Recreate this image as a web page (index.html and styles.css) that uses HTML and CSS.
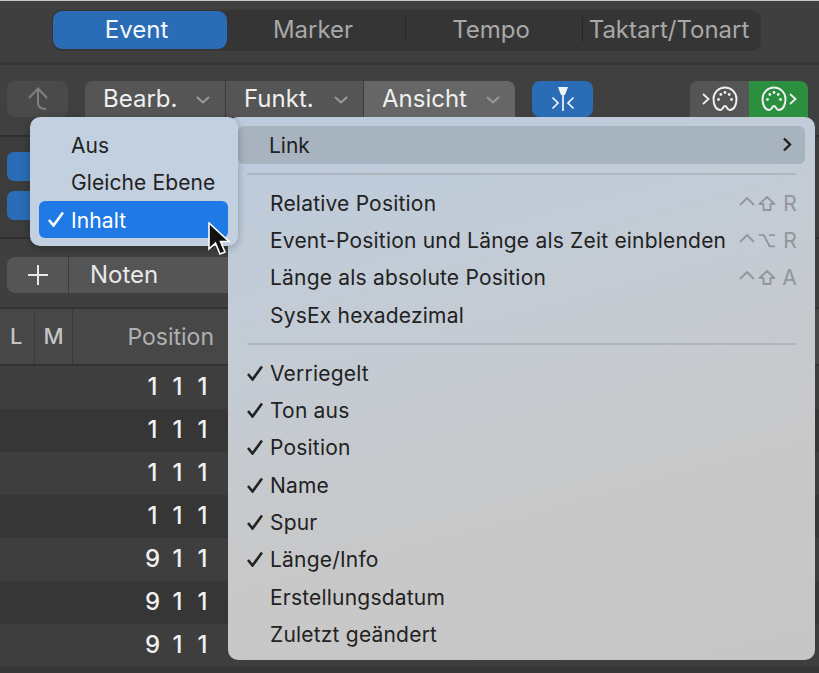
FILE: index.html
```html
<!DOCTYPE html>
<html lang="de">
<head>
    <meta charset="UTF-8">
    <title>Event-Liste</title>
    <link rel="stylesheet" href="styles.css">
</head>
<body>
    <svg class="defs" width="0" height="0">
        <symbol id="chevron" viewBox="0 0 14 8"><path d="M1.500 1.500 7 6.500l5.500-5" fill="none" stroke="currentColor" stroke-width="2" stroke-linecap="round" stroke-linejoin="round"/></symbol>
        <symbol id="midi" viewBox="0 0 26 26">
            <path d="M8.500 24C4.500 24 1.500 20 1.500 13a11.500 11.500 0 0 1 23 0c0 7-3 11-7 11-2.500 0-2.500-4-4.500-4s-2 4-4.500 4Z" fill="none" stroke="currentColor" stroke-width="2"/>
            <g fill="currentColor"><circle cx="6.500" cy="13.500" r="1.400"/><circle cx="8.800" cy="8.500" r="1.400"/><circle cx="13" cy="6.500" r="1.400"/><circle cx="17.200" cy="8.500" r="1.400"/><circle cx="19.500" cy="13.500" r="1.400"/></g>
        </symbol>
        <symbol id="ctrl" viewBox="0 0 16 10"><path d="M1 9 8 2l7 7" fill="none" stroke="currentColor" stroke-width="1.800"/></symbol>
        <symbol id="shift" viewBox="0 0 18 15"><path d="M9 1 1.500 8H5.500v6h7V8h4Z" fill="none" stroke="currentColor" stroke-width="1.800" stroke-linejoin="round"/></symbol>
        <symbol id="opt" viewBox="0 0 16 14"><path d="M0.500 2H5l5.500 10.500H15.500M10 2h5.500" fill="none" stroke="currentColor" stroke-width="1.800"/></symbol>
        <symbol id="check" viewBox="0 0 16 16"><path d="M1 9 5.500 14.500 15 1.500" fill="none" stroke="currentColor" stroke-width="2.600"/></symbol>
    </svg>

    <div class="window">
        <header class="tab-bar">
            <nav class="tabs">
                <span class="tab tab-active">Event</span>
                <span class="tab tab-line">Marker</span>
                <span class="tab tab-line">Tempo</span>
                <span class="tab">Taktart/Tonart</span>
            </nav>
        </header>

        <section class="toolbar">
            <button class="btn btn-up">
                <svg width="24" height="26" viewBox="0 0 24 26"><path d="M3 12 12 2.500 21 12M12 3v14c0 4 3 6 8 6" fill="none" stroke="currentColor" stroke-width="2"/></svg>
            </button>
            <div class="btn-group">
                <button class="btn menu-btn menu-edit">Bearb. <svg class="chev"><use href="#chevron"/></svg></button>
                <button class="btn menu-btn menu-func">Funkt. <svg class="chev"><use href="#chevron"/></svg></button>
                <button class="btn menu-btn menu-view">Ansicht <svg class="chev"><use href="#chevron"/></svg></button>
            </div>
            <button class="btn btn-catch">
                <svg width="24" height="26" viewBox="0 0 24 26"><path d="M7 1h10l-3 8h-4Z" fill="currentColor"/><path d="M12 7v18M1.500 11.500l5.500 5.500-5.500 5.500M22.500 11.500 17 17l5.500 5.500" fill="none" stroke="currentColor" stroke-width="1.700"/></svg>
            </button>
            <div class="btn-group midi-group">
                <button class="btn midi-btn">
                    <svg class="midi-arrow" viewBox="0 0 8 12"><path d="M1 1l5.500 5L1 11" fill="none" stroke="currentColor" stroke-width="1.800"/></svg>
                    <svg class="midi-icon"><use href="#midi"/></svg>
                </button>
                <button class="btn midi-btn midi-on">
                    <svg class="midi-icon"><use href="#midi"/></svg>
                    <svg class="midi-arrow" viewBox="0 0 8 12"><path d="M1 1l5.500 5L1 11" fill="none" stroke="currentColor" stroke-width="1.800"/></svg>
                </button>
            </div>
        </section>

        <section class="filter-bar">
            <span class="filter-btn"></span>
            <span class="filter-btn"></span>
        </section>

        <section class="add-bar">
            <div class="add-group">
                <span class="add-plus"><svg width="20" height="20" viewBox="0 0 20 20"><path d="M10 0v20M0 10h20" stroke="currentColor" stroke-width="2"/></svg></span>
                <span class="add-label">Noten</span>
            </div>
        </section>

        <section class="event-list">
            <div class="list-head">
                <span class="head-l">L</span>
                <span class="head-m">M</span>
                <span class="head-pos">Position</span>
            </div>
            <div class="list-row"><span>1</span><span>1</span><span>1</span></div>
            <div class="list-row"><span>1</span><span>1</span><span>1</span></div>
            <div class="list-row"><span>1</span><span>1</span><span>1</span></div>
            <div class="list-row"><span>1</span><span>1</span><span>1</span></div>
            <div class="list-row"><span>9</span><span>1</span><span>1</span></div>
            <div class="list-row"><span>9</span><span>1</span><span>1</span></div>
            <div class="list-row"><span>9</span><span>1</span><span>1</span></div>
        </section>
    </div>

    <div class="menu view-menu">
        <div class="item item-hover">Link
            <svg class="arrow" viewBox="0 0 10 15"><path d="M2 1.500 8 7.500l-6 6" fill="none" stroke="currentColor" stroke-width="2.400"/></svg>
        </div>
        <div class="sep"></div>
        <div class="item">Relative Position
            <span class="keys"><svg class="key-ctrl"><use href="#ctrl"/></svg><svg class="key-mod"><use href="#shift"/></svg><b>R</b></span>
        </div>
        <div class="item">Event-Position und Länge als Zeit einblenden
            <span class="keys"><svg class="key-ctrl"><use href="#ctrl"/></svg><svg class="key-mod"><use href="#opt"/></svg><b>R</b></span>
        </div>
        <div class="item">Länge als absolute Position
            <span class="keys"><svg class="key-ctrl"><use href="#ctrl"/></svg><svg class="key-mod"><use href="#shift"/></svg><b>A</b></span>
        </div>
        <div class="item">SysEx hexadezimal</div>
        <div class="sep"></div>
        <div class="item"><svg class="tick"><use href="#check"/></svg>Verriegelt</div>
        <div class="item"><svg class="tick"><use href="#check"/></svg>Ton aus</div>
        <div class="item"><svg class="tick"><use href="#check"/></svg>Position</div>
        <div class="item"><svg class="tick"><use href="#check"/></svg>Name</div>
        <div class="item"><svg class="tick"><use href="#check"/></svg>Spur</div>
        <div class="item"><svg class="tick"><use href="#check"/></svg>Länge/Info</div>
        <div class="item">Erstellungsdatum</div>
        <div class="item">Zuletzt geändert</div>
    </div>

    <div class="menu link-menu">
        <div class="item">Aus</div>
        <div class="item">Gleiche Ebene</div>
        <div class="item item-active"><svg class="tick"><use href="#check"/></svg>Inhalt</div>
    </div>

    <svg class="cursor" width="24" height="34" viewBox="0 0 24 34">
        <path d="M2 1v26l6.500-6 4.500 11 5-2-4.500-10.500H22Z" fill="#111" stroke="#fff" stroke-width="1.600"/>
    </svg>
</body>
</html>
```

FILE: styles.css
```css
* {
    margin: 0;
    padding: 0;
    box-sizing: border-box;
}

html, body {
    width: 819px;
    height: 673px;
    overflow: hidden;
}

body {
    position: relative;
    font-family: Inter, 'Liberation Sans', sans-serif;
    background-color: #363636;
    color: #e8e8e8;
}

button {
    font: inherit;
    border: none;
    color: inherit;
}

.defs {
    position: absolute;
}

/* tabs */
.tab-bar {
    height: 65px;
    padding: 9px 0 0 52px;
    background-color: #3f3f3f;
    border-top: 1px solid #c9c9c9;
    border-bottom: 3px solid #353535;
}

.tabs {
    display: grid;
    grid-template-columns: 174px 179px 177px 179px;
    width: 709px;
    height: 41px;
    padding: 1px 0 0 1px;
    background-color: #353535;
    border-radius: 10px;
}

.tab {
    display: flex;
    align-items: center;
    justify-content: center;
    height: 38px;
    padding: 0 7px 2px 0;
    font-size: 24px;
    color: #a8a8a8;
    position: relative;
}

.tab-line::after {
    content: "";
    position: absolute;
    right: 0;
    top: 6px;
    height: 25px;
    border-right: 1px solid #262626;
}

.tab-active {
    background-color: #2a6cb5;
    border-radius: 9px;
    color: #f4f7fb;
}

/* toolbar */
.toolbar {
    display: flex;
    height: 72px;
    padding: 16px 11px 0 7px;
    background-color: #404040;
    border-bottom: 2px solid #2f2f2f;
}

.btn {
    display: flex;
    align-items: center;
    height: 36px;
    background-color: #555;
}

.btn-up {
    justify-content: center;
    width: 61px;
    background-color: #4a4a4a;
    border-radius: 8px;
    color: #808080;
    margin-right: 17px;
}

.btn-group {
    display: flex;
    border-radius: 8px;
    overflow: hidden;
}

.menu-btn {
    justify-content: space-between;
    font-size: 24px;
    color: #efefef;
    padding: 0 15px 2px 18px;
    border-right: 1px solid #3c3c3c;
}

.menu-edit { width: 141px; }
.menu-func { width: 138px; }
.menu-view { width: 151px; background-color: #666; border-right: none; }

.chev {
    width: 14px;
    height: 8px;
    margin-top: 4px;
    color: #9a9a9a;
}

.btn-catch {
    justify-content: center;
    width: 61px;
    margin-left: 17px;
    background-color: #2a6cb5;
    border-radius: 8px;
    color: #f2f5f9;
}

.midi-group {
    margin-left: auto;
}

.midi-btn {
    justify-content: center;
    gap: 2px;
    width: 59px;
    color: #eee;
}

.midi-on {
    background-color: #2a8f3f;
}

.midi-icon {
    width: 26px;
    height: 26px;
}

.midi-arrow {
    width: 8px;
    height: 12px;
}

/* rest of the window */
.filter-bar {
    display: flex;
    flex-direction: column;
    gap: 10px;
    height: 102px;
    padding: 15px 0 0 7px;
    background-color: #3c3c3c;
    border-bottom: 2px solid #2f2f2f;
}

.filter-btn {
    width: 60px;
    height: 29px;
    background-color: #2a6cb5;
    border-radius: 7px;
}

.add-bar {
    height: 70px;
    padding: 18px 0 0 7px;
    background-color: #3f3f3f;
    border-bottom: 2px solid #333;
}

.add-group {
    display: flex;
    width: 260px;
    height: 36px;
    background-color: #555;
    border-radius: 8px;
    font-size: 24px;
}

.add-plus {
    display: flex;
    align-items: center;
    justify-content: center;
    width: 62px;
    border-right: 1px solid #3c3c3c;
}

.add-label {
    display: flex;
    align-items: center;
    padding: 0 0 2px 21px;
}

.list-head {
    display: flex;
    align-items: center;
    height: 57px;
    background-color: #474747;
    border-bottom: 2px solid #333;
    font-size: 22px;
    color: #c4c4c4;
}

.head-l {
    width: 35px;
    padding-left: 10px;
    align-self: stretch;
    line-height: 55px;
    font-weight: 500;
    border-right: 1px solid #3a3a3a;
}

.head-m {
    width: 38px;
    text-align: center;
    align-self: stretch;
    line-height: 55px;
    font-weight: 500;
    border-right: 1px solid #3a3a3a;
}

.head-pos {
    width: 141px;
    text-align: right;
    font-size: 23px;
    color: #b0b0b0;
}

.list-row {
    display: grid;
    grid-template-columns: repeat(3, 25px);
    align-items: center;
    height: 43px;
    padding: 0 0 2px 140px;
    font-size: 24px;
    font-weight: 500;
    color: #f0f0f0;
    text-align: center;
    background-color: #3e3e3e;
}

.list-row:nth-child(odd) {
    background-color: #363636;
}

/* menus */
.menu {
    position: absolute;
    font-size: 21px;
    letter-spacing: 0.2px;
    color: #222;
    border-radius: 10px;
}

.view-menu {
    left: 228px;
    top: 117px;
    width: 587px;
    height: 543px;
    padding: 9px 10px;
    background: linear-gradient(165deg, #bccbde 0%, #c3ccd6 30%, #c8c8c8 70%, #c6c6c6 100%);
}

.link-menu {
    left: 30px;
    top: 117px;
    width: 208px;
    height: 129px;
    padding: 9px 10px 9px 9px;
    letter-spacing: 0.1px;
    background-color: #c3d0e0;
    box-shadow: 0 2px 8px rgba(0, 0, 0, 0.25);
}

.item {
    position: relative;
    display: flex;
    align-items: center;
    height: 37.300px;
    padding-left: 32px;
    border-radius: 6px;
    white-space: nowrap;
}

.link-menu .item {
    padding-top: 2px;
}

.item-hover {
    background-color: #a8b3c0;
    height: 37.500px;
    padding: 2px 0 0 31px;
    letter-spacing: 0;
}

.item-active {
    background-color: #1f7ae6;
    color: #fff;
}

.sep {
    height: 21px;
    padding-top: 9px;
}

.sep::before {
    content: "";
    display: block;
    margin: 0 9px;
    border-top: 2px solid #aeb6bf;
}

.arrow {
    position: absolute;
    right: 13px;
    top: 11px;
    width: 10px;
    height: 15px;
}

.keys {
    position: absolute;
    right: 8px;
    top: 0;
    bottom: 0;
    display: flex;
    align-items: center;
    color: #90969d;
}

.keys b {
    font-weight: 400;
    width: 21px;
    text-align: right;
}

.key-ctrl {
    width: 16px;
    height: 10px;
    margin: 0 3px 5px 0;
}

.key-mod {
    width: 18px;
    height: 15px;
}

.tick {
    position: absolute;
    left: 9px;
    top: 10px;
    width: 16px;
    height: 16px;
}

.cursor {
    position: absolute;
    left: 207px;
    top: 222px;
}
```
